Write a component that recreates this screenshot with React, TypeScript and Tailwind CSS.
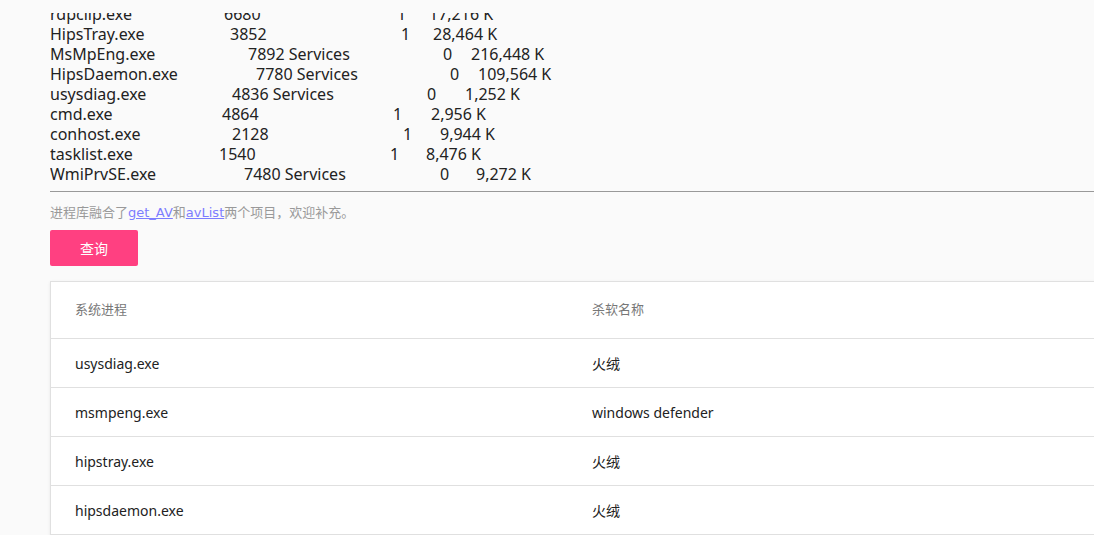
const lines: { name: string; cols: [number, string][] }[] = [
  { name: 'rdpclip.exe', cols: [[224, '6680'], [397, '1'], [429, '17,216 K']] },
  { name: 'HipsTray.exe', cols: [[230, '3852'], [401, '1'], [433, '28,464 K']] },
  { name: 'MsMpEng.exe', cols: [[248, '7892 Services'], [443, '0'], [471, '216,448 K']] },
  { name: 'HipsDaemon.exe', cols: [[256, '7780 Services'], [450, '0'], [478, '109,564 K']] },
  { name: 'usysdiag.exe', cols: [[232, '4836 Services'], [427, '0'], [465, '1,252 K']] },
  { name: 'cmd.exe', cols: [[222, '4864'], [393, '1'], [431, '2,956 K']] },
  { name: 'conhost.exe', cols: [[232, '2128'], [403, '1'], [440, '9,944 K']] },
  { name: 'tasklist.exe', cols: [[219, '1540'], [390, '1'], [426, '8,476 K']] },
  { name: 'WmiPrvSE.exe', cols: [[244, '7480 Services'], [440, '0'], [476, '9,272 K']] },
];

const results = [
  { proc: 'usysdiag.exe', av: '火绒' },
  { proc: 'msmpeng.exe', av: 'windows defender' },
  { proc: 'hipstray.exe', av: '火绒' },
  { proc: 'hipsdaemon.exe', av: '火绒' },
];

const font = "font-['Noto_Sans','Noto_Sans_CJK_SC',sans-serif]";

function ProcLine({ name, cols }: { name: string; cols: [number, string][] }) {
  const starts = [50, ...cols.map((c) => c[0])];
  const texts = [name, ...cols.map((c) => c[1])];
  return (
    <div className="flex h-5 items-center whitespace-pre leading-5">
      {texts.map((t, i) => (
        <span
          key={i}
          className="shrink-0"
          style={i < texts.length - 1 ? { width: starts[i + 1] - starts[i] } : undefined}
        >
          {t}
        </span>
      ))}
    </div>
  );
}

export default function App() {
  return (
    <div className={`h-[535px] w-full overflow-hidden bg-[#fafafa] ${font}`}>
      <div className="w-[1130px] pl-[50px]">
        {/* tasklist output, scrolled so the first line is half hidden */}
        <div className="h-[13px]" />
        <div className="h-[179px] overflow-hidden border-b border-[#999] text-[16px] text-[#222]">
          <div className="-mt-[9px]">
            {lines.map((l, i) => (
              <ProcLine key={i} name={l.name} cols={l.cols} />
            ))}
          </div>
        </div>

        <p className="mt-[11px] text-[13px] leading-[18px] text-[#999]">
          进程库融合了
          <a href="#" className="font-['DejaVu_Sans',sans-serif] text-[#7d7dff] underline">get_AV</a>
          和
          <a href="#" className="font-['DejaVu_Sans',sans-serif] text-[#7d7dff] underline">avList</a>
          两个项目，欢迎补充。
        </p>

        <button className="mt-[8px] flex h-9 w-[88px] items-center justify-center rounded-[2px] bg-[#ff4081] text-[14px] text-white">
          查询
        </button>

        <div className="mt-[15px] border border-[#e0e0e0] bg-white shadow-[0_1px_3px_rgba(0,0,0,0.08)]">
          <div className="grid h-[57px] grid-cols-[517px_1fr] items-center border-b border-[#e0e0e0] pl-[24px] text-[13px] text-[#777]">
            <span>系统进程</span>
            <span>杀软名称</span>
          </div>
          {results.map((r, i) => (
            <div
              key={i}
              className="grid h-[49px] grid-cols-[517px_1fr] items-center border-b border-[#e0e0e0] pl-[24px] text-[14px] text-[#222]"
            >
              <span>{r.proc}</span>
              <span>{r.av}</span>
            </div>
          ))}
        </div>
      </div>
    </div>
  );
}
